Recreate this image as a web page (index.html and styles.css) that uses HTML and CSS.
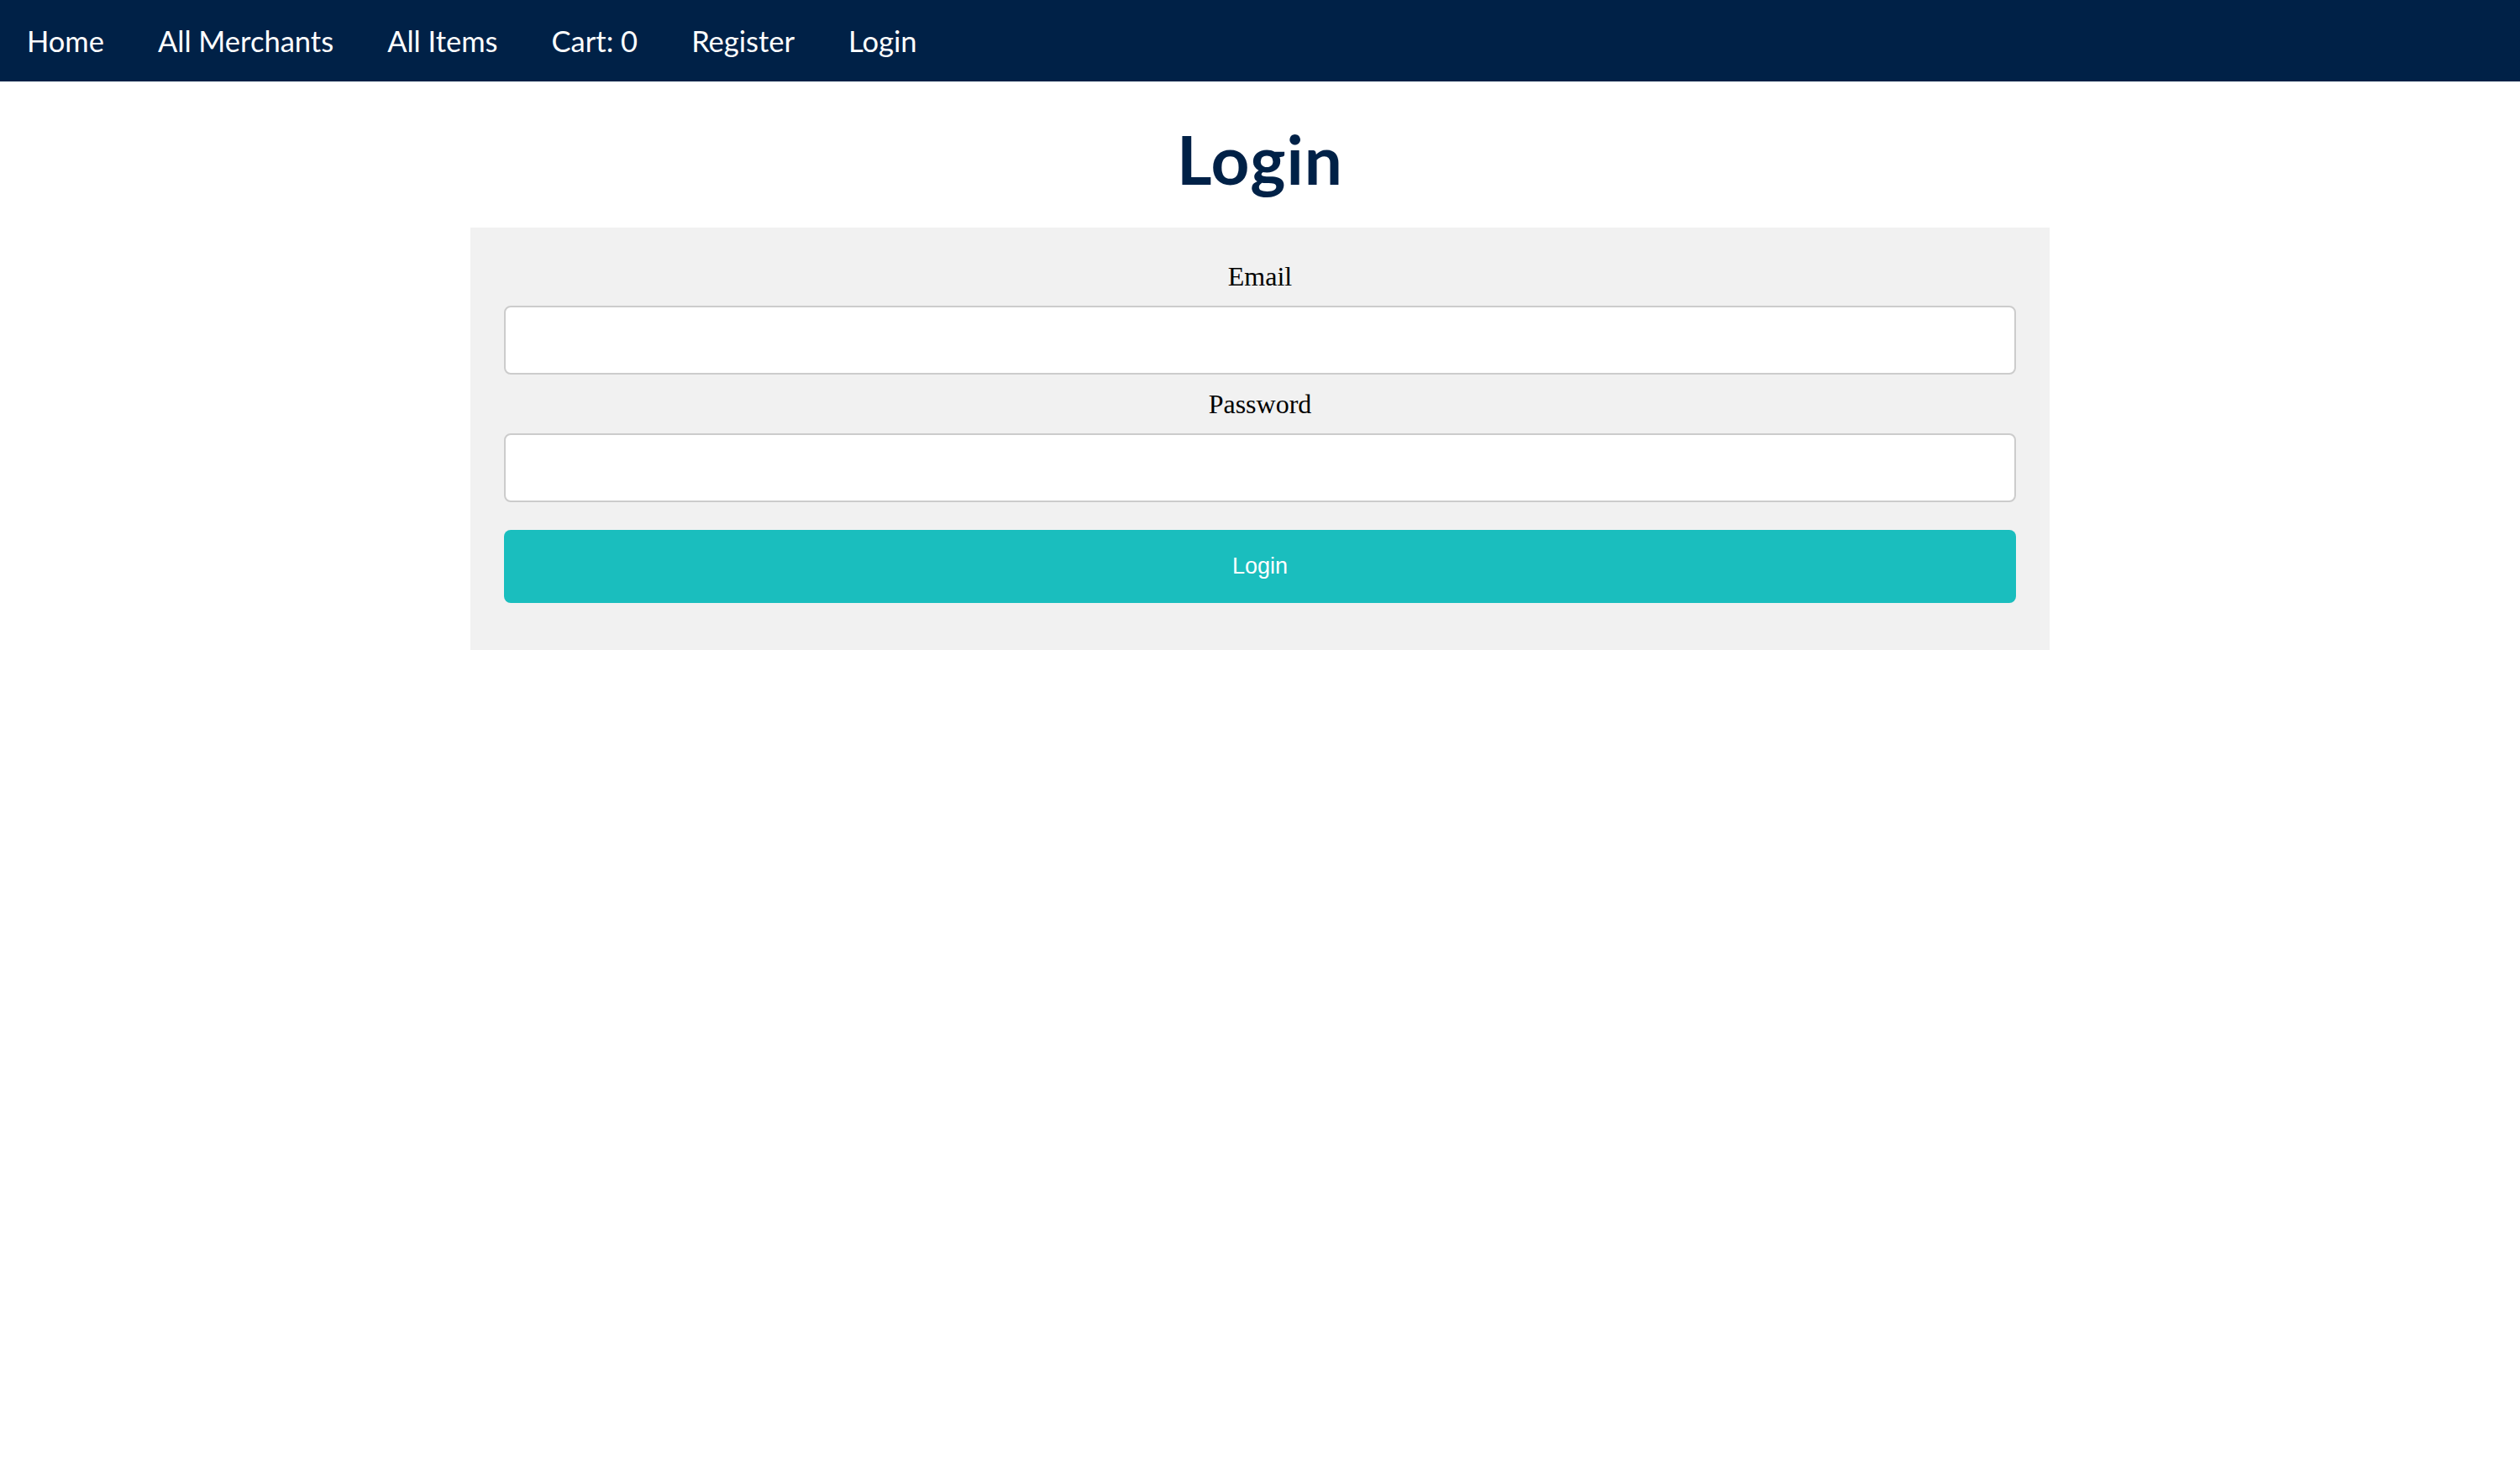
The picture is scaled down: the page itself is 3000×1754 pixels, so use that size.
FILE: index.html
```html
<!DOCTYPE html>
<html lang="en">
<head>
<meta charset="utf-8">
<title>Login</title>
<link rel="stylesheet" href="styles.css">
</head>
<body>
<nav class="topnav">
  <a class="nav-link" href="#">Home</a>
  <a class="nav-link" href="#">All Merchants</a>
  <a class="nav-link" href="#">All Items</a>
  <a class="nav-link" href="#">Cart: 0</a>
  <a class="nav-link" href="#">Register</a>
  <a class="nav-link" href="#">Login</a>
</nav>
<main class="page">
  <h1 class="page-title">Login</h1>
  <form class="login-form">
    <label class="field-label" for="email">Email</label>
    <input class="field-input" type="text" id="email" name="email">
    <label class="field-label" for="password">Password</label>
    <input class="field-input" type="password" id="password" name="password">
    <button class="submit-btn" type="button">Login</button>
  </form>
</main>
</body>
</html>
```
FILE: styles.css
```css
html, body {
  margin: 0;
  padding: 0;
  background: #ffffff;
}

.topnav {
  display: flex;
  align-items: center;
  height: 97px;
  background: #002147;
  font-family: "Lato", "Open Sans", sans-serif;
}

.nav-link {
  color: #ffffff;
  text-decoration: none;
  font-size: 34.5px;
  padding: 0 32px;
}

.page {
  display: flex;
  flex-direction: column;
  align-items: center;
}

.page-title {
  margin: 44px 0 34px;
  font-family: "Lato", "Open Sans", sans-serif;
  font-weight: 700;
  font-size: 80px;
  letter-spacing: 1px;
  line-height: 96px;
  color: #002147;
}

.login-form {
  box-sizing: border-box;
  width: 1880px;
  padding: 40px 40px 56px;
  background: #f1f1f1;
  display: flex;
  flex-direction: column;
}

.field-label {
  display: block;
  text-align: center;
  font-family: "Liberation Serif", "Times New Roman", serif;
  font-size: 32px;
  line-height: 37px;
  color: #000000;
  margin-bottom: 16px;
}

.field-input {
  box-sizing: border-box;
  width: 100%;
  height: 82px;
  margin: 0 0 17px;
  border: 2px solid #cccccc;
  border-radius: 8px;
  background: #ffffff;
  outline: none;
}

.submit-btn {
  margin-top: 16px;
  height: 87px;
  width: 100%;
  border: none;
  border-radius: 8px;
  background: #1abebe;
  color: #ffffff;
  font-family: "Liberation Sans", Arial, sans-serif;
  font-size: 27px;
}
```
